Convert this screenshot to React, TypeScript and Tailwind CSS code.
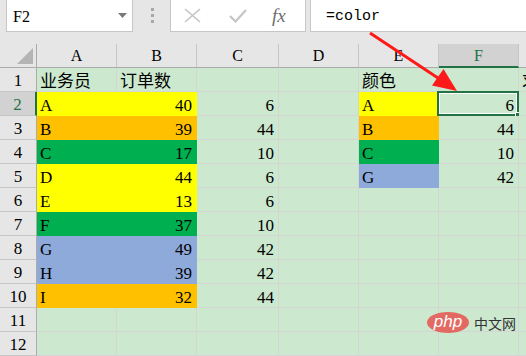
import React from "react";

type Cell = { t?: string; align?: "l" | "r"; bg?: string };

const Y = "#ffff00";
const O = "#ffc000";
const G = "#00b050";
const B = "#8eaadb";

const rows: Cell[][] = [
  [{ t: "业务员" }, { t: "订单数" }, {}, {}, { t: "颜色" }, {}, { t: "求" }],
  [{ t: "A", bg: Y }, { t: "40", align: "r", bg: Y }, { t: "6", align: "r" }, {}, { t: "A", bg: Y }, { t: "6", align: "r" }, {}],
  [{ t: "B", bg: O }, { t: "39", align: "r", bg: O }, { t: "44", align: "r" }, {}, { t: "B", bg: O }, { t: "44", align: "r" }, {}],
  [{ t: "C", bg: G }, { t: "17", align: "r", bg: G }, { t: "10", align: "r" }, {}, { t: "C", bg: G }, { t: "10", align: "r" }, {}],
  [{ t: "D", bg: Y }, { t: "44", align: "r", bg: Y }, { t: "6", align: "r" }, {}, { t: "G", bg: B }, { t: "42", align: "r" }, {}],
  [{ t: "E", bg: Y }, { t: "13", align: "r", bg: Y }, { t: "6", align: "r" }, {}, {}, {}, {}],
  [{ t: "F", bg: G }, { t: "37", align: "r", bg: G }, { t: "10", align: "r" }, {}, {}, {}, {}],
  [{ t: "G", bg: B }, { t: "49", align: "r", bg: B }, { t: "42", align: "r" }, {}, {}, {}, {}],
  [{ t: "H", bg: B }, { t: "39", align: "r", bg: B }, { t: "42", align: "r" }, {}, {}, {}, {}],
  [{ t: "I", bg: O }, { t: "32", align: "r", bg: O }, { t: "44", align: "r" }, {}, {}, {}, {}],
  [{}, {}, {}, {}, {}, {}, {}],
  [{}, {}, {}, {}, {}, {}, {}],
];

const cols = ["A", "B", "C", "D", "E", "F", "G"];
const gridCols = "37px 80px 80px 82px 80px 80px 80px 80px";
const serif = { fontFamily: '"Liberation Serif", "Noto Sans CJK SC", serif' };

export default function App() {
  return (
    <div
      className="relative w-[526px] h-[356px] overflow-hidden bg-[#e6e6e6] text-black"
      style={serif}
    >
      {/* toolbar */}
      <div className="flex h-[44px] items-start">
        <div className="ml-[6px] mt-[-1px] flex h-[33px] w-[127px] items-center justify-between border border-[#c6c6c6] bg-white pl-[6px] pr-[5px]">
          <span className="text-[16px] leading-none pt-[2px]">F2</span>
          <svg width="9" height="5" viewBox="0 0 9 5">
            <path d="M0 0 L9 0 L4.5 5 Z" fill="#7a7a7a" />
          </svg>
        </div>
        <div className="ml-[18px] mt-[8px] flex w-[3px] flex-col gap-[3px]">
          <div className="h-[3px] w-[3px] bg-[#a8a8a8]" />
          <div className="h-[3px] w-[3px] bg-[#a8a8a8]" />
          <div className="h-[3px] w-[3px] bg-[#a8a8a8]" />
        </div>
        <div className="ml-[16px] mt-[-1px] flex h-[33px] w-[136px] items-center border border-[#c6c6c6] bg-white">
          <svg className="ml-[13px]" width="17" height="15" viewBox="0 0 17 15">
            <path d="M1 1 L16 14 M16 1 L1 14" stroke="#c4c4c4" strokeWidth="1.6" fill="none" />
          </svg>
          <svg className="ml-[28px]" width="18" height="15" viewBox="0 0 18 15">
            <path d="M1 8 L6.5 13.5 L17 2" stroke="#c4c4c4" strokeWidth="2.2" fill="none" />
          </svg>
          <span
            className="ml-[25px] text-[19px] italic text-[#6e6e6e] leading-none"
            style={{ fontFamily: '"Liberation Serif", serif' }}
          >
            fx
          </span>
        </div>
        <div className="ml-[4px] mt-[-1px] flex h-[33px] flex-1 items-center border border-[#c6c6c6] border-r-0 bg-white pl-[15px]">
          <span
            className="text-[15px] leading-none pt-[1px]"
            style={{ fontFamily: '"Liberation Mono", monospace' }}
          >
            =color
          </span>
        </div>
      </div>

      {/* column headers */}
      <div className="grid h-[24px]" style={{ gridTemplateColumns: gridCols }}>
        <div className="relative border-b border-r border-[#ababab] bg-[#e6e6e6]">
          <svg className="absolute right-[3px] bottom-[3px]" width="16" height="16" viewBox="0 0 16 16">
            <path d="M16 0 L16 16 L0 16 Z" fill="#b4b4b4" />
          </svg>
        </div>
        {cols.map((c) => (
          <div
            key={c}
            className={
              c === "F"
                ? "flex justify-center border-r border-[#c6c6c6] border-b-2 border-b-[#217346] bg-[#d2d2d2] pt-[3px] text-[16px] leading-[18px] text-[#217346]"
                : "flex justify-center border-r border-b border-[#c6c6c6] border-b-[#ababab] pt-[3px] text-[16px] leading-[18px]"
            }
          >
            {c}
          </div>
        ))}
      </div>

      {/* rows */}
      {rows.map((r, i) => (
        <div key={i} className="grid h-[24px]" style={{ gridTemplateColumns: gridCols }}>
          <div
            className={
              i === 1
                ? "flex justify-center border-b border-[#c6c6c6] border-r-2 border-r-[#217346] bg-[#d2d2d2] pt-[3px] text-[17px] leading-[19px] text-[#217346]"
                : "flex justify-center border-b border-r border-[#c6c6c6] border-r-[#ababab] bg-[#e6e6e6] pt-[3px] text-[17px] leading-[19px]"
            }
          >
            {i + 1}
          </div>
          {r.map((c, j) => (
            <div
              key={j}
              className={
                "relative overflow-visible whitespace-nowrap border-b border-r pt-[4px] text-[17px] leading-[19px] " +
                (c.align === "r" ? "pr-[4px] text-right " : "pl-[3px] text-left ") +
                (c.bg ? "" : "border-[#d5d5d5] bg-[#cce8cf]")
              }
              style={c.bg ? { backgroundColor: c.bg, borderColor: c.bg } : undefined}
            >
              {c.t}
              {i === 1 && j === 5 && (
                <div className="pointer-events-none absolute left-[-2px] top-[-1px] h-[25px] w-[82px] border-2 border-[#217346]">
                  <div className="h-full w-full border border-white" />
                  <div className="absolute right-[-5px] bottom-[-5px] h-[7px] w-[7px] border border-white bg-[#217346]" />
                </div>
              )}
            </div>
          ))}
        </div>
      ))}

      {/* arrow */}
      <svg className="pointer-events-none absolute left-0 top-0" width="526" height="356">
        <line x1="370" y1="33" x2="441" y2="80" stroke="#ff1a1a" strokeWidth="3" />
        <path d="M457 91 L432 85.5 L443.5 69 Z" fill="#ff1a1a" />
      </svg>

      {/* watermark */}
      <div className="pointer-events-none absolute left-[427px] top-[312px] flex items-center">
        <div className="flex h-[21px] w-[42px] items-center justify-center rounded-[50%] bg-[#e36a62]">
          <span
            className="text-[17px] italic leading-none text-white pb-[3px]"
            style={{ fontFamily: '"Liberation Sans", sans-serif' }}
          >
            php
          </span>
        </div>
        <span
          className="ml-[5px] text-[14px] leading-none text-[#333]"
          style={{ fontFamily: '"Noto Sans CJK SC", sans-serif' }}
        >
          中文网
        </span>
      </div>
    </div>
  );
}
